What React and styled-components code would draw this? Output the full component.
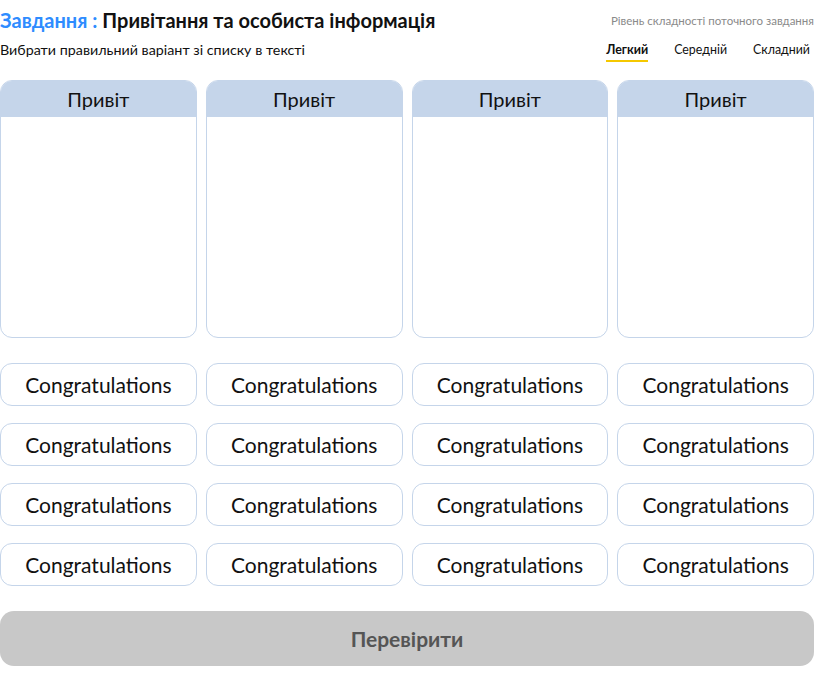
import React from 'react';
import styled, { createGlobalStyle } from 'styled-components';

const GlobalStyle = createGlobalStyle`
  html, body {
    margin: 0;
    padding: 0;
    background: #ffffff;
  }
  body {
    font-family: 'Lato', 'Noto Sans', sans-serif;
    color: #111111;
  }
  *, *::before, *::after {
    box-sizing: border-box;
  }
`;

const Page = styled.div`
  width: 814px;
  display: flex;
  flex-direction: column;
`;

const Header = styled.header`
  display: flex;
  justify-content: space-between;
  align-items: flex-start;
  height: 80px;
`;

const HeaderLeft = styled.div`
  display: flex;
  flex-direction: column;
  padding-top: 8px;
`;

const Title = styled.h1`
  margin: 0;
  font-size: 20px;
  font-weight: 700;
  line-height: 24px;
  color: #111111;
`;

const Accent = styled.span`
  color: #2e8cff;
`;

const Subtitle = styled.p`
  margin: 9px 0 0;
  font-size: 14.3px;
  line-height: 18px;
  color: #111111;
`;

const HeaderRight = styled.div`
  display: flex;
  flex-direction: column;
  align-items: flex-end;
  padding-top: 13px;
`;

const LevelLabel = styled.span`
  font-size: 11.5px;
  line-height: 16px;
  color: #8a8a8a;
`;

const Tabs = styled.div`
  display: flex;
  gap: 26px;
  margin-top: 13px;
  padding-right: 4px;
`;

const Tab = styled.span`
  font-size: 12.4px;
  line-height: 16px;
  padding-bottom: 2px;
  font-weight: ${p => (p.$active ? 700 : 400)};
  color: #111111;
  border-bottom: 2.5px solid ${p => (p.$active ? '#f5c800' : 'transparent')};
`;

const Grid = styled.div`
  display: grid;
  grid-template-columns: repeat(4, 1fr);
  column-gap: 9px;
`;

const Card = styled.div`
  height: 258px;
  border: 1px solid #c5d5ea;
  border-radius: 12px;
  overflow: hidden;
  display: flex;
  flex-direction: column;
`;

const CardHead = styled.div`
  height: 36px;
  background: #c5d5ea;
  display: flex;
  align-items: center;
  justify-content: center;
  font-size: 20px;
  color: #111111;
`;

const Options = styled(Grid)`
  margin-top: 25px;
  row-gap: 17px;
`;

const Option = styled.div`
  height: 43px;
  border: 1px solid #c5d5ea;
  border-radius: 12px;
  display: flex;
  align-items: center;
  justify-content: center;
  font-size: 21px;
  color: #111111;
`;

const CheckButton = styled.button`
  margin-top: 25px;
  height: 55px;
  width: 100%;
  border: none;
  border-radius: 14px;
  background: #c8c8c8;
  color: #555555;
  font-family: inherit;
  font-size: 21px;
  font-weight: 700;
`;

const columns = ['Привіт', 'Привіт', 'Привіт', 'Привіт'];
const options = Array.from({ length: 16 }, () => 'Congratulations');

export default function App() {
  return (
    <Page>
      <GlobalStyle />
      <Header>
        <HeaderLeft>
          <Title>
            <Accent>Завдання :</Accent> Привітання та особиста інформація
          </Title>
          <Subtitle>Вибрати правильний варіант зі списку в тексті</Subtitle>
        </HeaderLeft>
        <HeaderRight>
          <LevelLabel>Рівень складності поточного завдання</LevelLabel>
          <Tabs>
            <Tab $active>Легкий</Tab>
            <Tab>Середній</Tab>
            <Tab>Складний</Tab>
          </Tabs>
        </HeaderRight>
      </Header>
      <Grid>
        {columns.map((c, i) => (
          <Card key={i}>
            <CardHead>{c}</CardHead>
          </Card>
        ))}
      </Grid>
      <Options>
        {options.map((o, i) => (
          <Option key={i}>{o}</Option>
        ))}
      </Options>
      <CheckButton>Перевірити</CheckButton>
    </Page>
  );
}
